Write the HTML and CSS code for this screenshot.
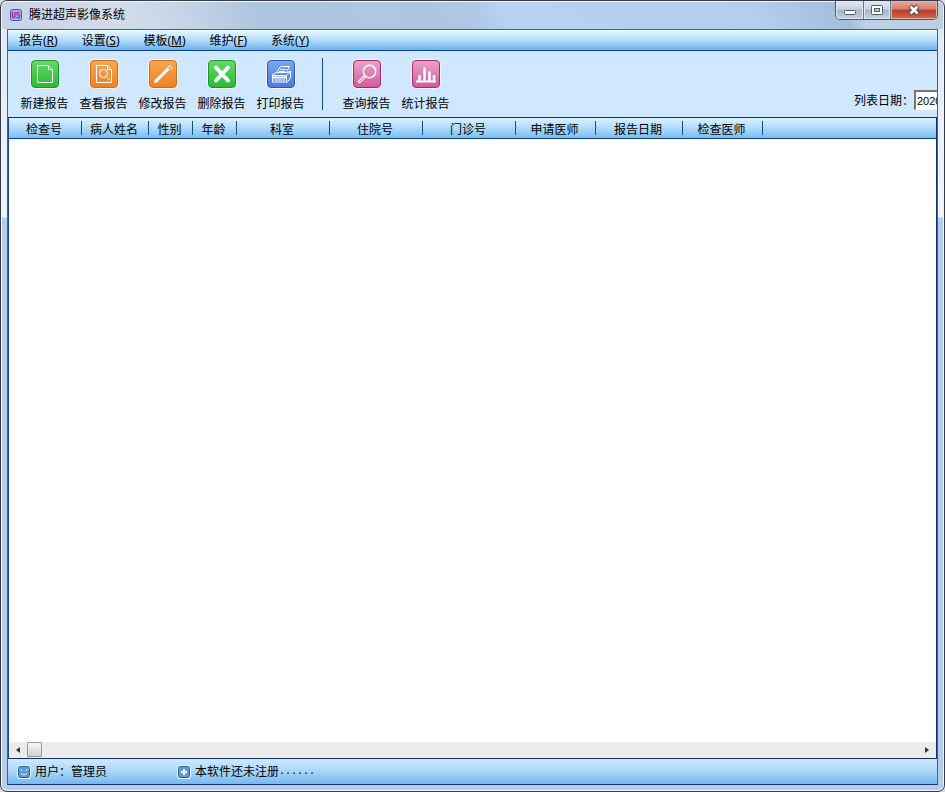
FILE: index.html
```html
<!DOCTYPE html>
<html lang="zh-CN">
<head>
<meta charset="utf-8">
<title>腾进超声影像系统</title>
<link rel="stylesheet" href="styles.css">
</head>
<body>
<div class="window">
  <header class="titlebar">
    <svg class="app-icon" viewBox="0 0 12 12" aria-hidden="true">
      <rect x=".5" y=".5" width="11" height="11" rx="2" fill="#8db4ea" stroke="#405ca4"/>
      <path d="M2.500 3v4.500q0 1 1 1h.5q1 0 1-1V3M9.700 3.500H7.500q-.7 0-.7 1v.5q0 .8.700.8h1.200q.8 0 .8.800v1q0 1-.8 1H6.500" fill="none" stroke="#c81d9c" stroke-width="1.300"/>
    </svg>
    <h1 class="title">腾进超声影像系统</h1>
    <div class="caption">
      <button class="cap min" aria-label="最小化"><svg viewBox="0 0 14 12"><rect x="1.500" y="6.500" width="11" height="4" rx="1" fill="#fff" stroke="#545b69"/></svg></button>
      <button class="cap max" aria-label="最大化"><svg viewBox="0 0 14 12"><rect x="1.500" y="1.500" width="11" height="9" rx="1" fill="#fff" stroke="#545b69"/><rect x="4.500" y="4.500" width="5" height="3" fill="#b9c4d2" stroke="#545b69"/></svg></button>
      <button class="cap close" aria-label="关闭"><svg viewBox="0 0 14 12"><path d="M3 2l8 8M11 2l-8 8" stroke="#59464f" stroke-width="4.600"/><path d="M3.500 2.500l7 7M10.500 2.500l-7 7" stroke="#fff" stroke-width="2.600"/></svg></button>
    </div>
  </header>

  <main class="client">
    <nav class="menubar">
      <button>报告(<u>R</u>)</button>
      <button>设置(<u>S</u>)</button>
      <button>模板(<u>M</u>)</button>
      <button>维护(<u>F</u>)</button>
      <button>系统(<u>Y</u>)</button>
    </nav>

    <div class="toolbar">
      <button class="tool"><span class="tile green"><svg viewBox="0 0 26 26"><path d="M5.500 4.500h11l4 4v13h-15zM16.500 4.500v4h4"/></svg></span>新建报告</button>
      <button class="tool"><span class="tile orange"><svg viewBox="0 0 26 26"><path d="M5.500 4.500h11l4 4v13h-15zM16.500 4.500v4h4"/><circle cx="12.500" cy="12.500" r="4"/><path d="M15.500 15.500l3 3.500"/></svg></span>查看报告</button>
      <button class="tool"><span class="tile orange"><svg viewBox="0 0 26 26"><path d="M6.500 19.500L18 8" stroke-width="3"/><path d="M4.500 21.500l1-3.500 2.500 2.500z" fill="#fff"/><path d="M17.500 6.500l1.500-1.500q1-.5 2 .5t.5 2l-1.500 1.500z"/></svg></span>修改报告</button>
      <button class="tool"><span class="tile green"><svg viewBox="0 0 26 26"><path d="M7 6.500l12 13M19 6.500L7 19.500" stroke-width="4" stroke-linecap="round"/></svg></span>删除报告</button>
      <button class="tool"><span class="tile blue"><svg viewBox="0 0 26 26"><path d="M8.500 11.500l4-6h9l-3 6M12.500 8.500h6M11 10.500h6"/><path d="M4.500 13.500l4-2h11l3-1.500v7l-3 4h-15zM4.500 14.500h14v6M18.500 14.500l4-4"/><path d="M5 16.500h13" stroke-width="2"/><path d="M6 19h11"/></svg></span>打印报告</button>
      <span class="divider"></span>
      <button class="tool"><span class="tile pink"><svg viewBox="0 0 26 26"><circle cx="15.500" cy="10.500" r="6.200" stroke-width="1.500"/><path d="M10.500 15.500l-6 6" stroke-width="3"/><path d="M10 16l-5 5" stroke="#d77bb0"/></svg></span>查询报告</button>
      <button class="tool"><span class="tile pink"><svg viewBox="0 0 26 26"><path d="M3 20.500h20" stroke-width="2"/><path d="M6.500 20v-6M11.500 20V6.500M16.500 20v-9.500M21 20v-6" stroke-width="2.500"/></svg></span>统计报告</button>
      <label class="date-label" for="list-date">列表日期：</label>
      <input class="date" id="list-date" type="text" value="2020">
    </div>

    <section class="list">
      <table class="grid">
        <thead>
          <tr>
            <th class="w-id">检查号</th>
            <th class="w-name">病人姓名</th>
            <th class="w-short">性别</th>
            <th class="w-short">年龄</th>
            <th class="w-wide">科室</th>
            <th class="w-wide">住院号</th>
            <th class="w-wide">门诊号</th>
            <th class="w-doctor">申请医师</th>
            <th class="w-date">报告日期</th>
            <th class="w-doctor">检查医师</th>
            <td></td>
          </tr>
        </thead>
      </table>
      <div class="rows"></div>
      <div class="scrollbar">
        <button class="arrow left" aria-label="向左滚动"></button>
        <span class="thumb"></span>
        <button class="arrow right" aria-label="向右滚动"></button>
      </div>
    </section>

    <footer class="status">
      <p class="user"><svg viewBox="0 0 14 14"><rect class="halo" width="14" height="14" rx="3"/><rect class="badge" x="1.500" y="1.500" width="11" height="11" rx="2"/><path d="M4.500 4v2M9.500 4v2M4 8q3 3.500 6 0" fill="none" stroke="#fff"/></svg>用户：管理员</p>
      <p><svg viewBox="0 0 14 14"><rect class="halo" width="14" height="14" rx="3"/><rect class="badge" x="1.500" y="1.500" width="11" height="11" rx="2"/><path d="M7 4v6M4 7h6" stroke="#fff" stroke-width="2"/></svg>本软件还未注册<span class="dots">......</span></p>
    </footer>
  </main>
</div>
</body>
</html>
```
FILE: styles.css
```css
* {
  box-sizing: border-box;
}

body {
  margin: 0;
  background: #d7dce3;
  color: #000;
  font: 12px/16px "Noto Sans", "Noto Sans CJK SC", sans-serif;
}

button {
  padding: 0;
  border: 0;
  background: none;
  color: inherit;
  font: inherit;
}

.window {
  display: flex;
  flex-direction: column;
  height: 100vh;
  padding: 0 6px 6px;
  border: 1px solid #353b49;
  border-radius: 7px;
  background: linear-gradient(#dce8f5 0, #f1f6fc 216px, #b5cde8 217px, #b5cde8 100%);
  box-shadow: inset 0 0 0 1px #eef5fc;
  overflow: hidden;
}

.titlebar {
  display: flex;
  align-items: flex-start;
  height: 28px;
  margin: 0 -5px;
  padding: 0 5px 0 8px;
  border-top: 1px solid #f2f7fc;
  border-radius: 5px 5px 0 0;
  background: linear-gradient(65deg, #c9d2e5 0, #d2dceb 110px, #c8d7e8 160px, #aec6df 235px, #adc7e4 430px, #b7d2ee 460px, #b3cfec 690px, #a3bedb 770px, #bcd1e6 785px, #bccee0 100%);
}

.app-icon {
  width: 12px;
  height: 12px;
  margin-top: 7px;
}

.title {
  margin: 4px 0 0 7px;
  font-size: 12px;
  line-height: 18px;
  font-weight: 400;
}

.caption {
  display: flex;
  margin: -1px 0 0 auto;
  border: 1px solid #4b586c;
  border-top: 0;
  border-radius: 0 0 5px 5px;
  overflow: hidden;
}

.cap {
  display: flex;
  align-items: center;
  justify-content: center;
  width: 28px;
  height: 18px;
  border-right: 1px solid #69788c;
  background: linear-gradient(#e2e9f1 0, #c9d4e1 45%, #a6b5c8 50%, #c3d2e2 100%);
  box-shadow: inset 0 0 0 1px #dce7f2;
}

.max {
  width: 27px;
}

.close {
  width: 46px;
  border-right: 0;
  background: linear-gradient(#e5aa9d 0, #d5806f 45%, #bb3d2b 50%, #d2684d 100%);
  box-shadow: inset 0 0 0 1px #e7b3a5;
}

.cap svg {
  width: 14px;
  height: 12px;
}

.client {
  display: flex;
  flex: 1;
  flex-direction: column;
  min-height: 0;
  border: 1px solid #4a6277;
  border-bottom-color: #14316e;
}

.menubar {
  display: flex;
  gap: 24px;
  height: 21px;
  padding: 2px 0 0 11px;
  border-bottom: 1px solid #0a4288;
  background: linear-gradient(#e9fbff, #b5dcfb 50%, #69b3f0);
}

.toolbar {
  display: flex;
  height: 66px;
  padding: 7px 0 0 7px;
  background: #cfe8ff;
  overflow: hidden;
}

.tool {
  display: flex;
  flex: none;
  flex-direction: column;
  align-items: center;
  gap: 7px;
  width: 59px;
  height: 55px;
  padding-top: 1px;
}

.tile {
  display: block;
  width: 30px;
  height: 30px;
  border: 1px solid #fff3ee;
  border-radius: 6px;
  background: #fff3ee;
}

.tile svg {
  display: block;
  width: 28px;
  height: 28px;
  border: 1px solid;
  border-radius: 4px;
  fill: none;
  stroke: #fff;
}

.green svg {
  border-color: #149b2b;
  background: linear-gradient(#65d768, #27bc39);
}

.orange svg {
  border-color: #d46c13;
  background: linear-gradient(#f5a854, #ed8125);
}

.blue svg {
  border-color: #2858b4;
  background: linear-gradient(#75a6f2, #497cdb);
}

.pink svg {
  border-color: #9f2b6d;
  background: linear-gradient(#eaa1ca, #d15c9d);
}

.divider {
  flex: none;
  width: 1px;
  height: 52px;
  margin: 0 14px 0 12px;
  background: #164c8e;
}

.date-label {
  margin: 35px 0 0 auto;
  white-space: nowrap;
}

.date {
  width: 23px;
  height: 20px;
  margin-top: 32px;
  padding: 0 0 0 1px;
  border: 2px solid #77736f;
  border-width: 2px 0 1px 2px;
  border-bottom-color: #fff;
  background: #fff;
  font: 11px "Liberation Sans", sans-serif;
}

.list {
  display: flex;
  flex: 1;
  flex-direction: column;
  min-height: 0;
  border: 1px solid #14316e;
  border-left-color: #174c91;
  background: #fff;
}

.grid {
  width: 100%;
  height: 21px;
  border-collapse: separate;
  border-spacing: 0;
  border-bottom: 1px solid #0a4288;
  background: linear-gradient(#d9f2ff, #b0daf9 50%, #7bbdf2);
  table-layout: fixed;
}

.grid th,
.grid td {
  height: 20px;
  padding: 3px 3px 0 0;
  font-weight: 400;
  text-align: center;
}

.grid th {
  background: linear-gradient(#164c8e, #164c8e) right center / 1px 14px no-repeat;
}

.w-id {
  width: 73px;
}

.w-name {
  width: 67px;
}

.w-short {
  width: 44px;
}

.w-wide {
  width: 93px;
}

.w-doctor {
  width: 80px;
}

.w-date {
  width: 87px;
}

.rows {
  flex: 1;
}

.scrollbar {
  display: flex;
  align-items: flex-start;
  height: 16px;
  background: #ececec;
}

.arrow {
  width: 18px;
  height: 15px;
}

.arrow::before {
  content: "";
  display: block;
  width: 0;
  margin: auto;
  border: 3px solid transparent;
}

.left::before {
  border-left-width: 0;
  border-right: 4px solid #333;
}

.right {
  margin-left: auto;
}

.right::before {
  border-right-width: 0;
  border-left: 4px solid #333;
}

.thumb {
  width: 15px;
  height: 15px;
  border: 1px solid #999;
  border-radius: 1px;
  background: linear-gradient(#f6f6f6, #d0d0d0);
}

.status {
  display: flex;
  align-items: center;
  height: 25px;
  padding-left: 9px;
  background: linear-gradient(#cdeaff, #a9d5f8 50%, #75b9f0);
}

.status p {
  display: flex;
  align-items: center;
  gap: 4px;
  margin: 0;
}

.status .user {
  width: 160px;
}

.status svg {
  width: 14px;
  height: 14px;
}

.status .halo {
  fill: #e6f5ff;
}

.status .badge {
  fill: #5a9de0;
  stroke: #23609f;
}

.dots {
  margin-left: -4px;
  font-family: "Liberation Mono", monospace;
  font-size: 10px;
}
```
